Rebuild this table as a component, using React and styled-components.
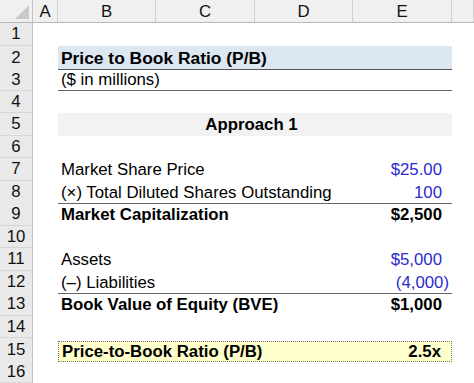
import React from "react";
import styled, { createGlobalStyle } from "styled-components";

const Global = createGlobalStyle`
  html, body { margin: 0; padding: 0; background: #fff; }
  body { font-family: "Liberation Sans", Arial, sans-serif; overflow: hidden; }
`;

const COLS = "33px 25px 98px 99px 98px 99px 22px";

const Sheet = styled.div`
  width: 474px;
  height: 383px;
  overflow: hidden;
  color: #000;
  font-size: 16.8px;
`;

const HeaderRow = styled.div`
  display: grid;
  grid-template-columns: ${COLS};
  height: 23px;
  background: #f0f0f0;
  border-bottom: 1px solid #b8b8b8;
  box-sizing: border-box;
`;

const Corner = styled.div`
  position: relative;
  border-right: 1px solid #c4c4c4;
  &::after {
    content: "";
    position: absolute;
    right: 3px;
    bottom: 3px;
    width: 0;
    height: 0;
    border-left: 14px solid transparent;
    border-bottom: 14px solid #c9c9c9;
  }
`;

const ColHead = styled.div`
  display: flex;
  align-items: center;
  justify-content: center;
  border-right: 1px solid #d2d2d2;
  font-size: 16.8px;
  color: #111;
  padding-top: 1px;
`;

const Row = styled.div`
  display: grid;
  grid-template-columns: ${COLS};
  height: 22.5px;
`;

const RowNum = styled.div`
  display: flex;
  align-items: center;
  justify-content: center;
  background: #e9e9e9;
  border-right: 1px solid #c4c4c4;
  border-bottom: 1px solid #d6d6d6;
  box-sizing: border-box;
  color: #111;
  font-size: 16.8px;
  padding-top: 1px;
`;

const fills = {
  title: "#dde7f2",
  section: "#f2f2f2",
  result: "#ffffcc",
};

const Content = styled.div`
  grid-column: 3 / 7;
  display: flex;
  align-items: center;
  justify-content: ${({ $center }) => ($center ? "center" : "space-between")};
  box-sizing: border-box;
  padding: 2px 10px 0 3px;
  background: ${({ $fill }) => fills[$fill] || "transparent"};
  border-bottom: ${({ $line }) =>
    $line === "dark" ? "1.5px solid #555" : $line ? "1px solid #666" : "none"};
  ${({ $fill }) =>
    $fill === "result" &&
    `border: 1px dotted #777; margin: 3px 0 0 0; height: 21px; padding-top: 1px;`}
  font-size: ${({ $fill }) => ($fill === "title" ? "17.4px" : "16.8px")};
  font-weight: ${({ $bold }) => ($bold ? 700 : 400)};
  white-space: nowrap;
`;

const Value = styled.span`
  color: ${({ $input }) => ($input ? "#2b2bd0" : "#000")};
  font-weight: ${({ $bold }) => ($bold ? 700 : 400)};
  margin-right: ${({ $paren }) => ($paren ? "-7px" : "0")};
`;

const rows = [
  {},
  { label: "Price to Book Ratio (P/B)", bold: true, fill: "title", line: "dark" },
  { label: "($ in millions)", line: true },
  {},
  { label: "Approach 1", bold: true, fill: "section", center: true },
  {},
  { label: "Market Share Price", value: "$25.00", input: true },
  { label: "(×) Total Diluted Shares Outstanding", value: "100", input: true, line: true },
  { label: "Market Capitalization", value: "$2,500", bold: true },
  {},
  { label: "Assets", value: "$5,000", input: true },
  { label: "(–) Liabilities", value: "(4,000)", input: true, paren: true, line: true },
  { label: "Book Value of Equity (BVE)", value: "$1,000", bold: true },
  {},
  { label: "Price-to-Book Ratio (P/B)", value: "2.5x", bold: true, fill: "result" },
  {},
];

export default function App() {
  return (
    <>
      <Global />
      <Sheet>
        <HeaderRow>
          <Corner />
          {["A", "B", "C", "D", "E", ""].map((c, i) => (
            <ColHead key={i}>{c}</ColHead>
          ))}
        </HeaderRow>
        {rows.map((r, i) => (
          <Row key={i}>
            <RowNum>{i + 1}</RowNum>
            <div />
            {r.label ? (
              <Content $fill={r.fill} $line={r.line} $bold={r.bold} $center={r.center}>
                <span>{r.label}</span>
                {r.value && (
                  <Value $input={r.input} $bold={r.bold} $paren={r.paren}>
                    {r.value}
                  </Value>
                )}
              </Content>
            ) : (
              <Content />
            )}
            <div />
          </Row>
        ))}
      </Sheet>
    </>
  );
}
